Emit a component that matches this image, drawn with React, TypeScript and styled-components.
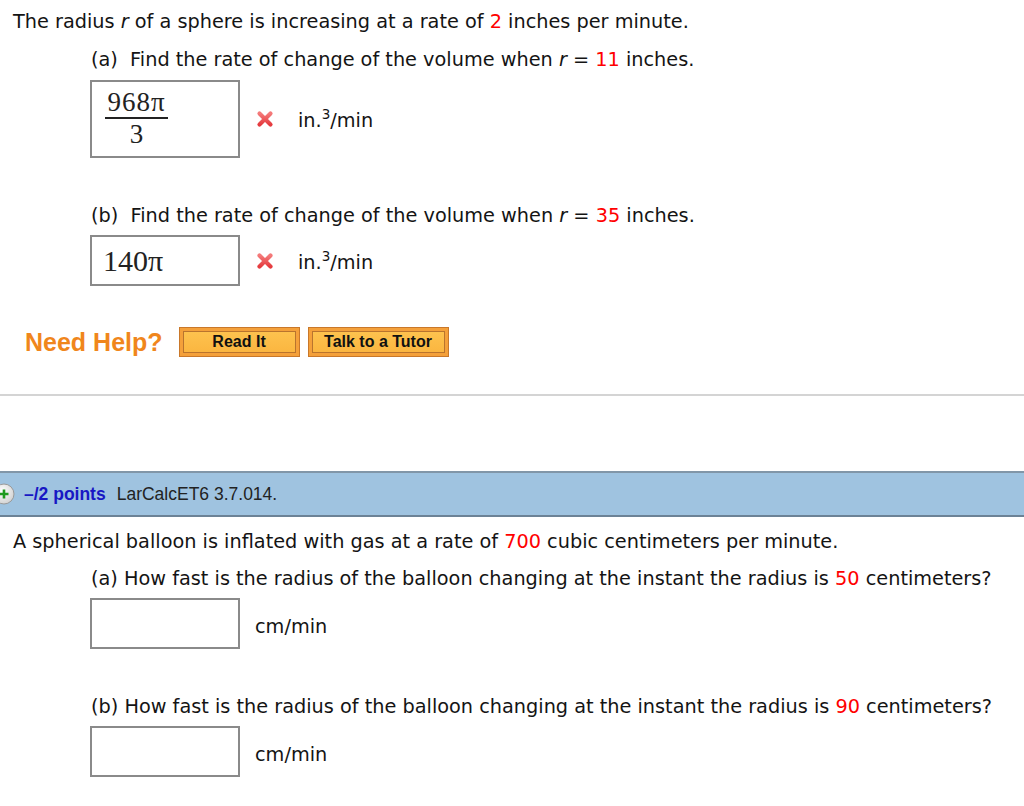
import React from "react";
import styled, { createGlobalStyle } from "styled-components";

const GlobalStyle = createGlobalStyle`
  html, body { margin: 0; padding: 0; background: #fff; }
  body { font-family: "DejaVu Sans", Verdana, sans-serif; font-size: 19.3px; color: #141414; }
`;

const Page = styled.div`
  padding-top: 9px;
  width: 1024px;
  overflow: hidden;
`;

const QuestionText = styled.div`
  line-height: 24px;
  height: 24px;
  padding-left: 13px;
  padding-top: 1px;
  margin-bottom: -1px;
  white-space: nowrap;
`;

const PartText = styled.div<{ $mt: number }>`
  line-height: 24px;
  height: 24px;
  padding-left: 91px;
  margin-top: ${(p) => p.$mt}px;
  white-space: nowrap;
`;

const Red = styled.span`
  color: #ff0000;
`;

const Var = styled.span`
  font-style: italic;
`;

const AnswerRow = styled.div<{ $mt: number }>`
  display: flex;
  align-items: center;
  padding-left: 90px;
  margin-top: ${(p) => p.$mt}px;
`;

const AnswerBox = styled.div<{ $h: number }>`
  box-sizing: border-box;
  width: 150px;
  height: ${(p) => p.$h}px;
  border: 2px solid #8a8a8a;
  background: #fff;
  display: flex;
  align-items: center;
  padding-left: 11px;
  font-family: "Liberation Serif", "Times New Roman", serif;
  color: #222;
`;

const Fraction = styled.div`
  display: inline-flex;
  flex-direction: column;
  align-items: center;
  margin-left: 2px;
  margin-top: -2px;
`;

const Numer = styled.div`
  font-size: 27px;
  letter-spacing: 1px;
  line-height: 24px;
  padding: 0 0 3px;
`;

const Denom = styled.div`
  font-size: 27px;
  line-height: 24px;
  padding-top: 3px;
`;

const FracLine = styled.div`
  width: 63px;
  height: 2px;
  background: #222;
`;

const BigValue = styled.div`
  font-size: 30px;
  line-height: 30px;
`;

const Mark = styled.svg`
  margin-left: 16px;
  flex: none;
`;

const Unit = styled.span<{ $ml: number; $pt: number }>`
  margin-left: ${(p) => p.$ml}px;
  padding-top: ${(p) => p.$pt}px;
  white-space: nowrap;
`;

const Sup = styled.sup`
  font-size: 13.5px;
  vertical-align: 8px;
  line-height: 0;
`;

const HelpRow = styled.div`
  display: flex;
  align-items: center;
  padding-left: 25px;
  margin-top: 41px;
  height: 30px;
`;

const HelpLabel = styled.span`
  font-family: "Liberation Sans", Arial, sans-serif;
  font-weight: bold;
  font-size: 25px;
  color: #f0861c;
  margin-right: 16px;
`;

const HelpButton = styled.div<{ $w: number }>`
  box-sizing: border-box;
  width: ${(p) => p.$w}px;
  height: 30px;
  margin-right: 8px;
  padding: 3px;
  background: #f4a03a;
  border: 1px solid #c9782a;
  display: flex;
`;

const HelpInner = styled.div`
  flex: 1;
  border: 1px solid #b9742e;
  background: linear-gradient(#fdc24e, #fbb640);
  display: flex;
  align-items: center;
  justify-content: center;
  font-family: "Liberation Sans", Arial, sans-serif;
  font-weight: bold;
  font-size: 16px;
  color: #111;
`;

const Divider = styled.div`
  margin-top: 37px;
  height: 2px;
  background: #d4d4d4;
`;

const QuestionBar = styled.div`
  margin-top: 75px;
  box-sizing: border-box;
  height: 46px;
  background: #9fc3e0;
  border-top: 2px solid #8196a8;
  border-bottom: 2px solid #6c8296;
  display: flex;
  align-items: center;
  font-family: "Liberation Sans", Arial, sans-serif;
  font-size: 17.5px;
`;

const ExpandIcon = styled.svg`
  margin-left: -7px;
  margin-right: 9px;
  flex: none;
`;

const Points = styled.span`
  font-weight: bold;
  color: #1717c4;
  margin-right: 11px;
`;

const Ref = styled.span`
  color: #222;
`;

const SecondQuestion = styled(QuestionText)`
  margin-top: 12px;
`;

const XMark = () => (
  <Mark width="18" height="18" viewBox="0 0 18 18">
    <defs>
      <linearGradient id="xg" x1="0" y1="0" x2="0" y2="1">
        <stop offset="0" stopColor="#f47a7a" />
        <stop offset="1" stopColor="#e53b3f" />
      </linearGradient>
    </defs>
    <path d="M3.5 3.5 L14.5 14.5 M14.5 3.5 L3.5 14.5" stroke="url(#xg)" strokeWidth="4.2" strokeLinecap="round" />
  </Mark>
);

export default function App() {
  return (
    <Page>
      <GlobalStyle />
      <QuestionText>
        The radius <Var>r</Var> of a sphere is increasing at a rate of <Red>2</Red> inches per minute.
      </QuestionText>
      <PartText $mt={15}>
        (a)&nbsp; Find the rate of change of the volume when <Var>r</Var> = <Red>11</Red> inches.
      </PartText>
      <AnswerRow $mt={8}>
        <AnswerBox $h={78}>
          <Fraction>
            <Numer>968π</Numer>
            <FracLine />
            <Denom>3</Denom>
          </Fraction>
        </AnswerBox>
        <XMark />
        <Unit $ml={24} $pt={2}>
          in.<Sup>3</Sup>/min
        </Unit>
      </AnswerRow>
      <PartText $mt={46}>
        (b)&nbsp; Find the rate of change of the volume when <Var>r</Var> = <Red>35</Red> inches.
      </PartText>
      <AnswerRow $mt={7}>
        <AnswerBox $h={51}>
          <BigValue>140π</BigValue>
        </AnswerBox>
        <XMark />
        <Unit $ml={24} $pt={3}>
          in.<Sup>3</Sup>/min
        </Unit>
      </AnswerRow>
      <HelpRow>
        <HelpLabel>Need Help?</HelpLabel>
        <HelpButton $w={121}>
          <HelpInner>Read It</HelpInner>
        </HelpButton>
        <HelpButton $w={141}>
          <HelpInner>Talk to a Tutor</HelpInner>
        </HelpButton>
      </HelpRow>
      <Divider />
      <QuestionBar>
        <ExpandIcon width="22" height="22" viewBox="0 0 22 22">
          <defs>
            <radialGradient id="cg" cx="0.4" cy="0.35" r="0.7">
              <stop offset="0" stopColor="#ffffff" />
              <stop offset="1" stopColor="#d0d0d0" />
            </radialGradient>
          </defs>
          <circle cx="11" cy="11" r="10" fill="url(#cg)" stroke="#9a9a9a" strokeWidth="1" />
          <path d="M11 6.5 V15.5 M6.5 11 H15.5" stroke="#1e9a1e" strokeWidth="2.6" />
        </ExpandIcon>
        <Points>–/2 points</Points>
        <Ref>LarCalcET6 3.7.014.</Ref>
      </QuestionBar>
      <SecondQuestion>
        A spherical balloon is inflated with gas at a rate of <Red>700</Red> cubic centimeters per minute.
      </SecondQuestion>
      <PartText $mt={14}>
        (a) How fast is the radius of the balloon changing at the instant the radius is <Red>50</Red> centimeters?
      </PartText>
      <AnswerRow $mt={7}>
        <AnswerBox $h={51} />
        <Unit $ml={15} $pt={5}>cm/min</Unit>
      </AnswerRow>
      <PartText $mt={46}>
        (b) How fast is the radius of the balloon changing at the instant the radius is <Red>90</Red> centimeters?
      </PartText>
      <AnswerRow $mt={7}>
        <AnswerBox $h={51} />
        <Unit $ml={15} $pt={5}>cm/min</Unit>
      </AnswerRow>
    </Page>
  );
}
